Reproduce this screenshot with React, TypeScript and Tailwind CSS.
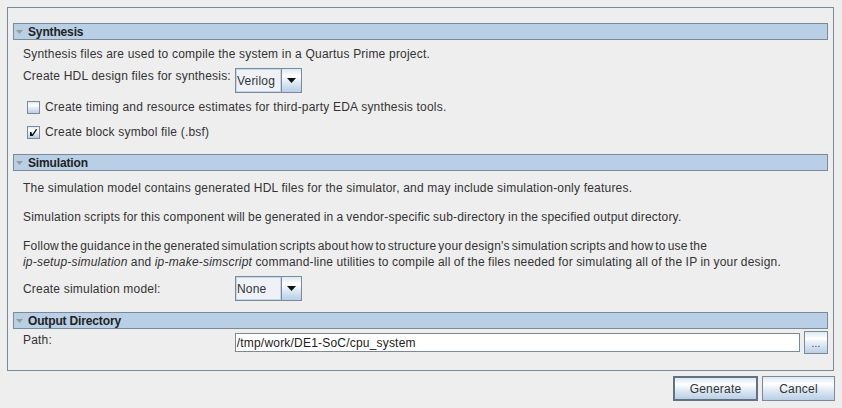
import React from "react";

const grad = "bg-[linear-gradient(to_bottom,#dde8f3_0%,#ffffff_30%,#dde8f3_60%,#b8cfe5_100%)]";

function Header({ title }: { title: string }) {
  return (
    <div className="h-[17px] border border-[#7a8a99] bg-[#b8cfe5] flex items-center pl-[2px]">
      <svg width="7" height="4" viewBox="0 0 7 4" className="shrink-0">
        <polygon points="0,0 7,0 3.5,4" fill="#9a9a9a" />
      </svg>
      <span className="ml-[5px] font-bold leading-[14px] text-[#222] tracking-[-0.15px]">{title}</span>
    </div>
  );
}

function Combo({ value }: { value: string }) {
  return (
    <div className="w-[67px] h-[25px] border border-[#7a8a99] flex bg-[#eeeeee]">
      <div className="flex-1 border border-[#c6d6e8] bg-[#eef2f7] flex items-center pl-0 leading-[14px]">
        {value}
      </div>
      <div className={`w-[20px] border-l border-[#7a8a99] flex items-center justify-center ${grad}`}>
        <svg width="9" height="5" viewBox="0 0 9 5">
          <polygon points="0,0 9,0 4.5,5" fill="#111" />
        </svg>
      </div>
    </div>
  );
}

function Check({ checked, label }: { checked: boolean; label: string }) {
  return (
    <div className="h-[14px] flex items-center pl-[4px]">
      <div className={`w-[13px] h-[13px] border border-[#7a8a99] shrink-0 flex items-center justify-center ${grad}`}>
        {checked && (
          <svg width="11" height="11" viewBox="0 0 11 11">
            <path d="M2 5 L2 9 L4.8 9 L9.2 2.6 L8 2 L4.2 7.4 L3.4 5 Z" fill="#111" />
          </svg>
        )}
      </div>
      <span className="ml-[5px] leading-[14px]">{label}</span>
    </div>
  );
}

export default function App() {
  return (
    <div className="w-[842px] h-[408px] bg-[#eeeeee] text-[12px] tracking-[0.2px] text-[#333333] font-['Liberation_Sans',Arial,sans-serif] pt-[7px] pl-[7px] flex flex-col">
      <div className="w-[827px] h-[364px] border border-[#7a8a99] pt-[15px] pl-[5px] pr-[5px] flex flex-col">
        <Header title="Synthesis" />
        <div className="pl-[10px] flex flex-col">
          <div className="mt-[7px] h-[14px] leading-[14px]">
            Synthesis files are used to compile the system in a Quartus Prime project.
          </div>
          <div className="mt-[7px] h-[25px] flex items-start">
            <span className="w-[212px] pt-[1px] leading-[14px]">Create HDL design files for synthesis:</span>
            <Combo value="Verilog" />
          </div>
          <div className="mt-[7px]">
            <Check checked={false} label="Create timing and resource estimates for third-party EDA synthesis tools." />
          </div>
          <div className="mt-[11px]">
            <Check checked={true} label="Create block symbol file (.bsf)" />
          </div>
        </div>

        <div className="mt-[15px]">
          <Header title="Simulation" />
        </div>
        <div className="pl-[10px] flex flex-col">
          <div className="mt-[10px] h-[14px] leading-[14px] whitespace-nowrap">
            The simulation model contains generated HDL files for the simulator, and may include simulation-only features.
          </div>
          <div className="mt-[15px] h-[14px] leading-[14px] whitespace-nowrap [word-spacing:-0.5px]">
            Simulation scripts for this component will be generated in a vendor-specific sub-directory in the specified output directory.
          </div>
          <div className="mt-[14px] leading-[16px] whitespace-nowrap">
            <div className="[word-spacing:-1.5px]">
              Follow the guidance in the generated simulation scripts about how to structure your design's simulation scripts and how to use the
            </div>
            <div className="[word-spacing:-0.25px]">
              <i>ip-setup-simulation</i> and <i>ip-make-simscript</i> command-line utilities to compile all of the files needed for simulating all of the IP in your design.
            </div>
          </div>
          <div className="mt-[6px] h-[25px] flex items-center">
            <span className="w-[212px] leading-[14px]">Create simulation model:</span>
            <Combo value="None" />
          </div>
        </div>

        <div className="mt-[11px]">
          <Header title="Output Directory" />
        </div>
        <div className="pl-[10px] mt-[2px] h-[23px] flex items-center">
          <span className="w-[212px] self-start mt-[2px] leading-[14px]">Path:</span>
          <div className="w-[566px] h-[19px] border border-[#7a8a99] bg-white flex items-center pl-[1px] leading-[14px] text-[#222]">
            /tmp/work/DE1-SoC/cpu_system
          </div>
          <div className={`ml-[4px] w-[24px] h-[23px] border border-[#7a8a99] flex items-end justify-center pb-[4px] text-[10px] leading-[10px] ${grad}`}>
            ...
          </div>
        </div>
      </div>

      <div className="mt-[5px] pr-[7px] flex justify-end gap-[4px]">
        <button className={`w-[85px] h-[25px] border-2 border-[#637282] flex items-center justify-center leading-[14px] text-[#333] ${grad}`}>
          Generate
        </button>
        <button className={`w-[73px] h-[25px] border border-[#7a8a99] flex items-center justify-center leading-[14px] text-[#333] ${grad}`}>
          Cancel
        </button>
      </div>
    </div>
  );
}
